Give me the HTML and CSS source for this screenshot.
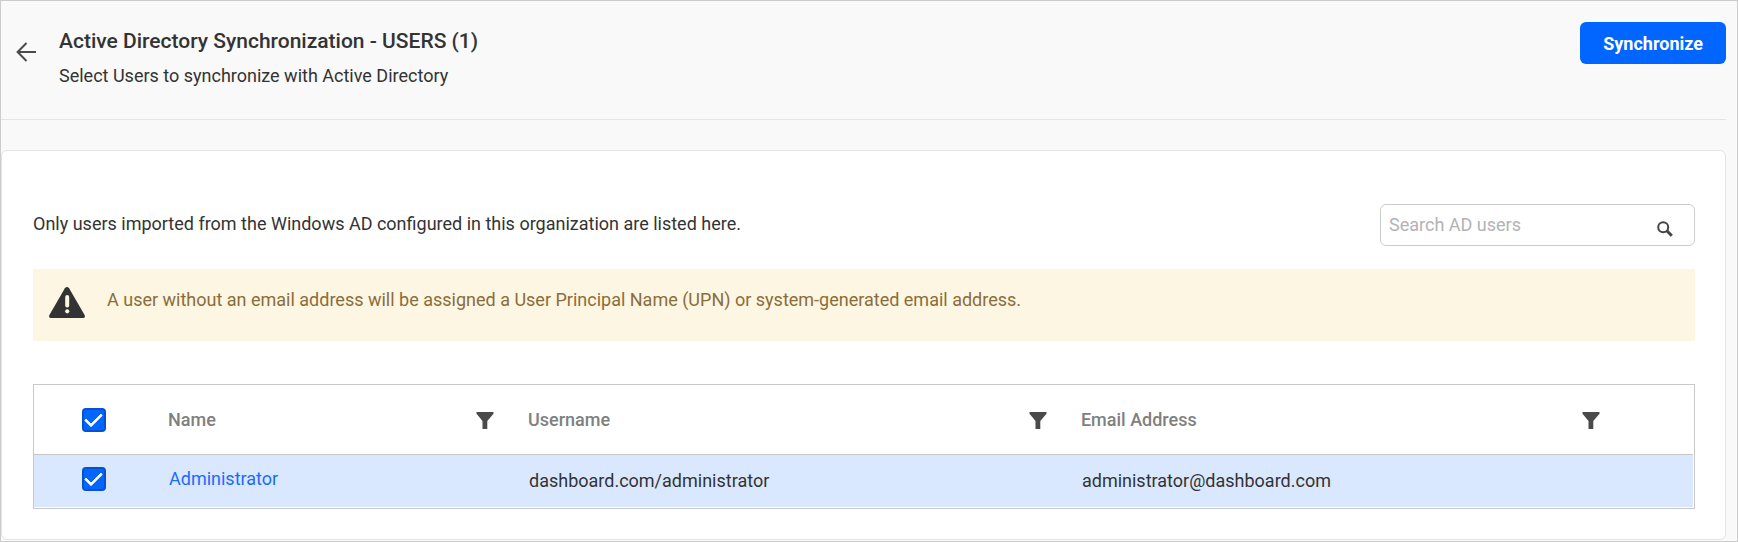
FILE: index.html
```html
<!DOCTYPE html>
<html lang="en">
<head>
<meta charset="utf-8">
<meta name="viewport" content="width=device-width, initial-scale=1">
<title>Active Directory Synchronization</title>
<link rel="stylesheet" href="styles.css">
</head>
<body>
<svg class="sprite" aria-hidden="true">
  <symbol id="filter" viewBox="0 0 18 17"><path d="M.5 0h17v1.8L11.3 9v8H6.5V9L.5 1.8z"/></symbol>
</svg>
<div class="page">
  <header class="header">
    <a class="back" href="#" aria-label="Back">
      <svg width="20" height="20" viewBox="0 0 20 20"><path d="M10.5 1L1.6 10l8.9 9M1.6 10H20"/></svg>
    </a>
    <div class="heading">
      <h1 class="title">Active Directory Synchronization - USERS (1)</h1>
      <p class="subtitle">Select Users to synchronize with Active Directory</p>
    </div>
    <button class="sync" type="button">Synchronize</button>
  </header>

  <main class="card">
    <div class="toolbar">
      <p class="note">Only users imported from the Windows AD configured in this organization are listed here.</p>
      <form class="search" role="search">
        <input class="search-input" type="text" placeholder="Search AD users" aria-label="Search AD users">
        <button class="search-button" type="button" aria-label="Search">
          <svg width="16" height="16" viewBox="0 0 16 16"><circle cx="6.2" cy="6.2" r="5"/><path class="handle" d="M9.8 9.8l5 5"/></svg>
        </button>
      </form>
    </div>

    <div class="alert" role="note">
      <svg class="alert-icon" width="36" height="31" viewBox="0 0 36 31">
        <path class="triangle" d="M15.9 1.2Q18-1.2 20.1 1.2L35.6 28Q36.6 31 34 31H2Q-.6 31 .4 28z"/>
        <rect class="mark" x="16.2" y="8" width="4" height="12.6" rx="2"/>
        <circle class="mark" cx="18.2" cy="24.3" r="2.1"/>
      </svg>
      <p class="alert-text">A user without an email address will be assigned a User Principal Name (UPN) or system-generated email address.</p>
    </div>

    <div class="grid">
      <table class="table">
        <colgroup><col class="col-check"><col class="col-name"><col class="col-wide"><col class="col-wide"><col></colgroup>
        <thead>
          <tr>
            <th class="check-cell"><input class="check" type="checkbox" checked aria-label="Select all users"></th>
            <th><div class="head"><span>Name</span><button class="filter" type="button" aria-label="Filter by name"><svg width="18" height="17"><use href="#filter"/></svg></button></div></th>
            <th><div class="head"><span>Username</span><button class="filter" type="button" aria-label="Filter by username"><svg width="18" height="17"><use href="#filter"/></svg></button></div></th>
            <th><div class="head"><span>Email Address</span><button class="filter" type="button" aria-label="Filter by email address"><svg width="18" height="17"><use href="#filter"/></svg></button></div></th>
            <th></th>
          </tr>
        </thead>
        <tbody>
          <tr>
            <td class="check-cell"><input class="check" type="checkbox" checked aria-label="Select Administrator"></td>
            <td class="name-cell"><a class="user" href="#">Administrator</a></td>
            <td>dashboard.com/administrator</td>
            <td>administrator@dashboard.com</td>
            <td></td>
          </tr>
        </tbody>
      </table>
    </div>
  </main>
</div>
</body>
</html>
```
FILE: styles.css
```css
* {
  box-sizing: border-box;
}

body {
  margin: 0;
  background: #f9f9f9;
  color: #333;
  font: 18px/24px Roboto, "Liberation Sans", sans-serif;
}

h1,
p {
  margin: 0;
}

button,
input {
  font: inherit;
}

button {
  padding: 0;
  border: 0;
  background: none;
  cursor: pointer;
}

svg {
  display: block;
}

.sprite {
  position: absolute;
  width: 0;
  height: 0;
}

.page {
  min-height: 100vh;
  padding: 0 11px 1px 0;
  border: 1px solid #ccc;
}

.header {
  display: flex;
  align-items: flex-start;
  padding: 21px 0 31px 15px;
  border-bottom: 1px solid #e4e4e4;
}

.back {
  margin: 20px 23px 0 0;
}

.back svg {
  fill: none;
  stroke: #4a4a4a;
  stroke-width: 2;
}

.heading {
  flex: 1;
  padding-top: 5px;
}

.title {
  margin-bottom: 9px;
  font-size: 21px;
  font-weight: 500;
  line-height: 28px;
}

.sync {
  height: 42px;
  padding: 2px 23px 0;
  border-radius: 6px;
  background: #06f;
  color: #fff;
  font-weight: 700;
}

.card {
  margin-top: 30px;
  padding: 53px 30px 30px 31px;
  border: 1px solid #e4e4e4;
  border-radius: 6px;
  background: #fff;
}

.toolbar {
  display: flex;
  align-items: center;
  justify-content: space-between;
  gap: 24px;
  margin-bottom: 23px;
}

.note {
  padding-bottom: 2px;
}

.search {
  display: flex;
  width: 315px;
  height: 42px;
  border: 1px solid #ccc;
  border-radius: 6px;
}

.search-input {
  flex: 1;
  min-width: 0;
  padding: 0 8px;
  border: 0;
  outline: 0;
  background: none;
  color: #333;
}

.search-input::placeholder {
  color: #b3b3b3;
  opacity: 1;
}

.search-button {
  padding: 8px 21px 0 0;
}

.search-button svg {
  fill: none;
  stroke: #444;
  stroke-width: 2;
}

.search-button .handle {
  stroke-width: 3;
}

.alert {
  display: flex;
  gap: 22px;
  min-height: 72px;
  margin-bottom: 43px;
  padding: 18px 16px;
  background: #fdf6e2;
  color: #8a6d3b;
}

.alert-text {
  padding-top: 1px;
}

.triangle {
  fill: #333;
}

.mark {
  fill: #fdf6e2;
}

.grid {
  padding: 0 1px 1px 0;
  border: 1px solid #c8c8c8;
}

.table {
  width: 100%;
  border-collapse: separate;
  border-spacing: 0;
  table-layout: fixed;
}

.col-check {
  width: 120px;
}

.col-name {
  width: 360px;
}

.col-wide {
  width: 33.33%;
}

th,
td {
  padding: 0 15px 0 14px;
  text-align: left;
}

th {
  height: 70px;
  border-bottom: 1px solid #c8c8c8;
  color: #808080;
  font-weight: 500;
}

td {
  height: 52px;
  padding-left: 15px;
  background: #dae8ff;
}

.name-cell,
tbody .check-cell {
  padding-bottom: 4px;
}

.check-cell {
  padding: 0;
  text-align: center;
}

.head {
  display: flex;
  align-items: center;
  justify-content: space-between;
  padding-right: 5px;
}

.filter {
  padding-top: 2px;
  fill: #4a4a4a;
}

.user {
  color: #1a6bff;
  text-decoration: none;
}

.check {
  display: grid;
  place-content: center;
  width: 24px;
  height: 24px;
  margin: 0 auto;
  border: 2px solid #0552cc;
  border-radius: 4px;
  background: #06f;
  appearance: none;
}

.check:checked::before {
  width: 14px;
  height: 7px;
  margin: 0 2px 4px 0;
  border: solid #fff;
  border-width: 0 0 3px 3px;
  border-radius: 1px;
  content: "";
  transform: rotate(-45deg);
}
```
